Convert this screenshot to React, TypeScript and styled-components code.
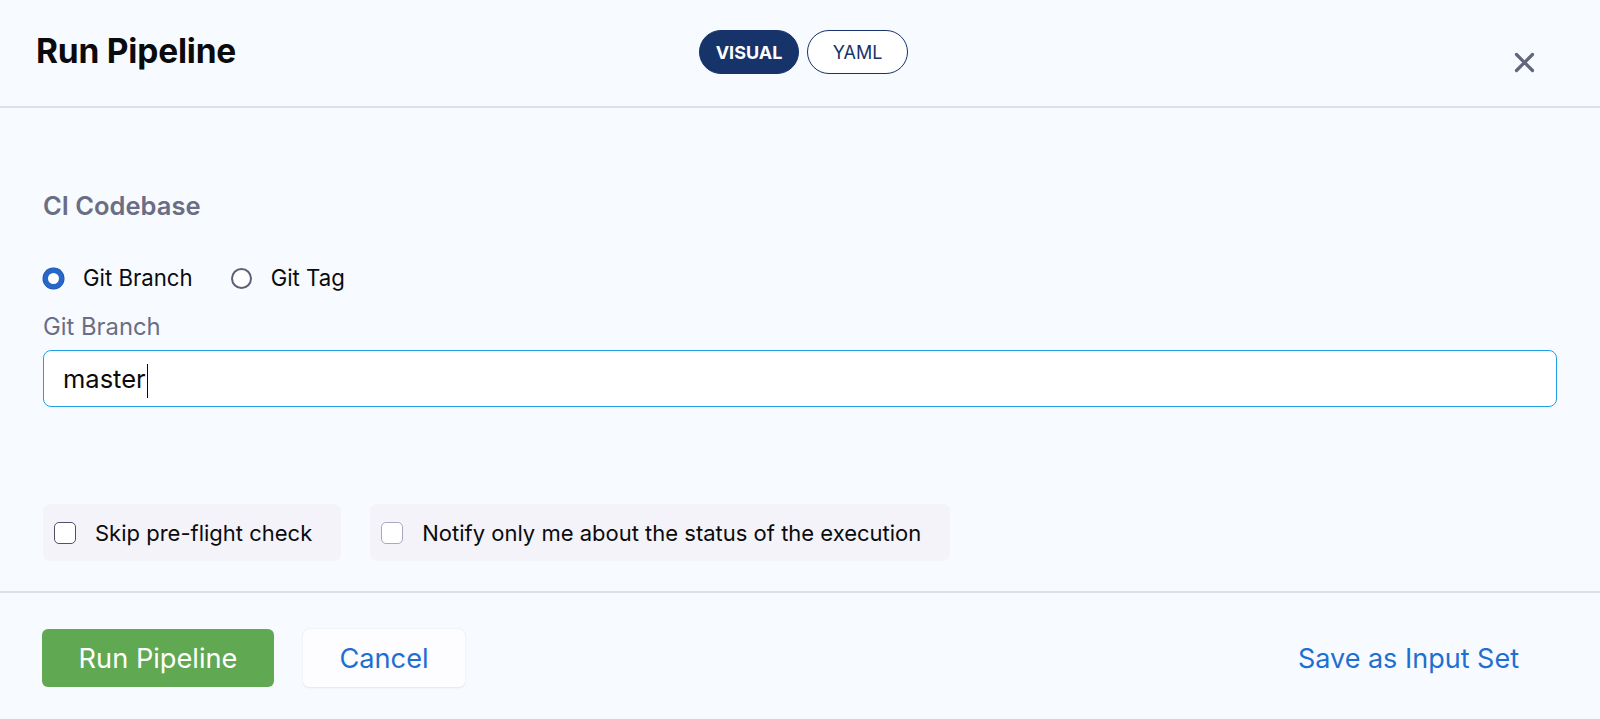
import React from "react";
import styled, { createGlobalStyle } from "styled-components";

const GlobalStyle = createGlobalStyle`
  * { box-sizing: border-box; }
  html, body { margin: 0; padding: 0; }
  body {
    background: #f7fbff;
    font-family: Inter, "Noto Sans", sans-serif;
    color: #0b0b0d;
  }
`;

const Page = styled.div`
  width: 1600px;
  height: 719px;
  display: flex;
  flex-direction: column;
  background: #f7fbff;
`;

const Header = styled.header`
  display: grid;
  grid-template-columns: 1fr auto 1fr;
  align-items: center;
  height: 108px;
  padding: 0 36px 6px 36px;
  border-bottom: 2px solid #dfe0e7;
`;

const Title = styled.h1`
  margin: 2px 0 0 0;
  font-size: 33.5px;
  font-weight: 700;
  line-height: 40px;
  letter-spacing: -0.2px;
  color: #0b0b0d;
`;

const ToggleGroup = styled.div`
  display: flex;
  gap: 8px;
  margin: 4px 0 0 7px;
`;

const ToggleButton = styled.button<{ $active?: boolean; $w: number }>`
  width: ${(p) => p.$w}px;
  height: 44px;
  border-radius: 22px;
  border: 1.5px solid #16336a;
  background: ${(p) => (p.$active ? "#16336a" : "#ffffff")};
  color: ${(p) => (p.$active ? "#ffffff" : "#16336a")};
  font-family: Inter, sans-serif;
  font-size: 18px;
  font-weight: ${(p) => (p.$active ? 700 : 400)};
  padding: 0;
  cursor: pointer;
`;

const CloseButton = styled.button`
  justify-self: end;
  align-self: start;
  margin-top: 52px;
  margin-right: 29px;
  width: 21px;
  height: 21px;
  padding: 0;
  border: none;
  background: transparent;
  display: flex;
  cursor: pointer;
`;

const Body = styled.main`
  flex: 1;
  display: flex;
  flex-direction: column;
  padding: 83px 43px 0 43px;
`;

const SectionTitle = styled.h2`
  margin: 0;
  font-size: 25.5px;
  line-height: 30px;
  font-weight: 600;
  color: #6b6d85;
`;

const RadioRow = styled.div`
  display: flex;
  align-items: center;
  gap: 38px;
  height: 28px;
  margin-top: 43px;
`;

const RadioLabel = styled.label`
  display: flex;
  align-items: center;
  gap: 19px;
  font-size: 22.2px;
  line-height: 28px;
  color: #0b0b0d;
  cursor: pointer;
`;

const RadioCircle = styled.span<{ $checked?: boolean }>`
  width: 21px;
  height: 21px;
  border-radius: 50%;
  background: #ffffff;
  border: ${(p) => (p.$checked ? "5.5px solid #2767c9" : "2px solid #5d5f77")};
  box-shadow: ${(p) => (p.$checked ? "0 0 0 0.5px #1b4f9f" : "none")};
  flex-shrink: 0;
`;

const FieldLabel = styled.div`
  margin-top: 21px;
  font-size: 23.8px;
  line-height: 27px;
  color: #6b6d85;
`;

const TextField = styled.div`
  margin-top: 10px;
  height: 57px;
  border: 1.5px solid #1fa0e2;
  border-radius: 8px;
  background: #ffffff;
  display: flex;
  align-items: center;
  padding-left: 19px;
  font-size: 25.5px;
  color: #0b0b0d;
`;

const Caret = styled.span`
  display: inline-block;
  width: 1.5px;
  height: 34px;
  margin-top: 4px;
  background: #0b0b0d;
  margin-left: 1px;
`;

const OptionsRow = styled.div`
  display: flex;
  gap: 29px;
  margin-top: 97px;
`;

const OptionBox = styled.label`
  display: flex;
  align-items: center;
  gap: 19px;
  height: 57px;
  padding: 0 29px 0 11px;
  border-radius: 7px;
  background: #f3f3f9;
  font-size: 22px;
  color: #0b0b0d;
  cursor: pointer;
`;

const CheckSquare = styled.span<{ $dark?: boolean }>`
  width: 22px;
  height: 22px;
  border-radius: 5px;
  background: #ffffff;
  border: 1.5px solid ${(p) => (p.$dark ? "#4f516a" : "#a7a9bf")};
  flex-shrink: 0;
`;

const Footer = styled.footer`
  height: 128px;
  border-top: 2px solid #dfe0e7;
  display: flex;
  align-items: flex-start;
  padding: 36px 43px 0 42px;
  gap: 29px;
`;

const PrimaryButton = styled.button`
  width: 232px;
  height: 58px;
  border: none;
  border-radius: 6px;
  background: #61a853;
  color: #ffffff;
  font-family: Inter, sans-serif;
  font-size: 27.2px;
  font-weight: 400;
  cursor: pointer;
`;

const SecondaryButton = styled.button`
  width: 162px;
  height: 58px;
  border: none;
  border-radius: 6px;
  background: #fdfdff;
  box-shadow: 0 0 1px rgba(40, 41, 61, 0.08), 0 0.5px 2px rgba(96, 97, 112, 0.12);
  color: #1f6fd2;
  font-family: Inter, sans-serif;
  font-size: 27.2px;
  cursor: pointer;
`;

const LinkButton = styled.button`
  margin-left: auto;
  height: 58px;
  padding: 0 38px;
  border: none;
  background: transparent;
  color: #1f6fd2;
  font-family: Inter, sans-serif;
  font-size: 27px;
  cursor: pointer;
`;

const CloseIcon = () => (
  <svg width="21" height="21" viewBox="0 0 21 21" fill="none">
    <path
      d="M2.5 2.5 L18.5 18.5 M18.5 2.5 L2.5 18.5"
      stroke="#62657b"
      strokeWidth="3.2"
      strokeLinecap="round"
    />
  </svg>
);

export default function App() {
  return (
    <>
      <GlobalStyle />
      <Page>
        <Header>
          <Title>Run Pipeline</Title>
          <ToggleGroup>
            <ToggleButton $active $w={100}>VISUAL</ToggleButton>
            <ToggleButton $w={101}>YAML</ToggleButton>
          </ToggleGroup>
          <CloseButton aria-label="Close">
            <CloseIcon />
          </CloseButton>
        </Header>
        <Body>
          <SectionTitle>CI Codebase</SectionTitle>
          <RadioRow>
            <RadioLabel>
              <RadioCircle $checked />
              Git Branch
            </RadioLabel>
            <RadioLabel>
              <RadioCircle />
              Git Tag
            </RadioLabel>
          </RadioRow>
          <FieldLabel>Git Branch</FieldLabel>
          <TextField role="textbox">
            master
            <Caret />
          </TextField>
          <OptionsRow>
            <OptionBox>
              <CheckSquare $dark />
              Skip pre-flight check
            </OptionBox>
            <OptionBox>
              <CheckSquare />
              Notify only me about the status of the execution
            </OptionBox>
          </OptionsRow>
        </Body>
        <Footer>
          <PrimaryButton>Run Pipeline</PrimaryButton>
          <SecondaryButton>Cancel</SecondaryButton>
          <LinkButton>Save as Input Set</LinkButton>
        </Footer>
      </Page>
    </>
  );
}
